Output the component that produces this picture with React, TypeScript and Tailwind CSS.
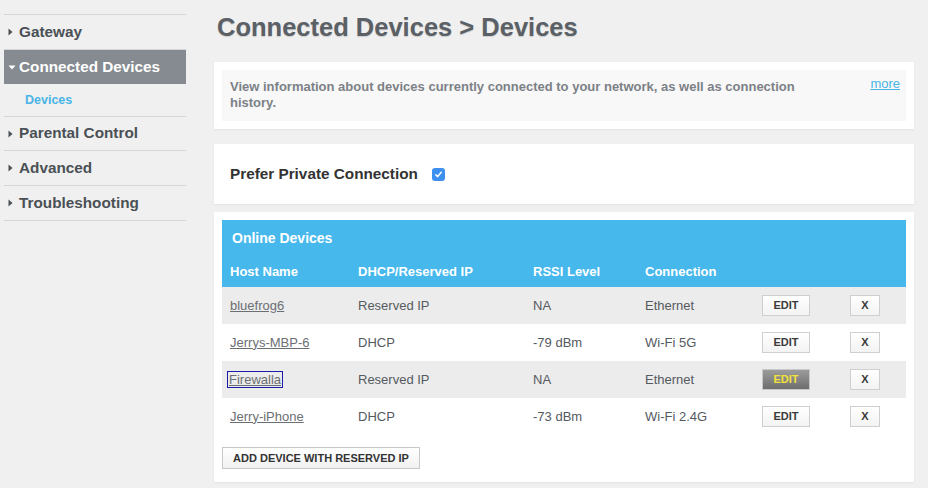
import React from "react";

const font = { fontFamily: '"Liberation Sans", Arial, Helvetica, sans-serif' };

function Tri({ down, color }: { down?: boolean; color: string }) {
  return down ? (
    <svg width="8" height="5" viewBox="0 0 8 5" className="shrink-0">
      <path d="M0.5 0.5 L7.5 0.5 L4 4.5 Z" fill={color} />
    </svg>
  ) : (
    <svg width="5" height="8" viewBox="0 0 5 8" className="shrink-0">
      <path d="M0.5 0.5 L4.5 4 L0.5 7.5 Z" fill={color} />
    </svg>
  );
}

function NavItem({ label, h }: { label: string; h: string }) {
  return (
    <div className={`${h} flex items-center border-b border-[#d6d6d6] pl-[4px] gap-[6px] text-[15.3px] font-bold text-[#4a5055]`}>
      <Tri color="#4a5055" />
      <span>{label}</span>
    </div>
  );
}

const rows = [
  { host: "bluefrog6", ip: "Reserved IP", rssi: "NA", conn: "Ethernet" },
  { host: "Jerrys-MBP-6", ip: "DHCP", rssi: "-79 dBm", conn: "Wi-Fi 5G" },
  { host: "Firewalla", ip: "Reserved IP", rssi: "NA", conn: "Ethernet", focus: true },
  { host: "Jerry-iPhone", ip: "DHCP", rssi: "-73 dBm", conn: "Wi-Fi 2.4G" },
];

const cols = "grid grid-cols-[128px_175px_112px_117px_88px_1fr] items-center pl-[8px]";

export default function App() {
  return (
    <div style={font} className="w-[928px] h-[488px] bg-[#f0f0f0] flex overflow-hidden">
      <div className="w-[186px] pl-[4px] pt-[14px] shrink-0">
        <div className="border-t border-[#d6d6d6]">
          <NavItem label="Gateway" h="h-[35px]" />
          <div className="h-[34px] flex items-center bg-[#858b90] pl-[4px] gap-[3px] text-[15.3px] font-bold text-white">
            <Tri down color="#ffffff" />
            <span>Connected Devices</span>
          </div>
          <div className="h-[33px] flex items-center border-b border-[#d6d6d6] pl-[21px] text-[12.5px] font-bold text-[#4ab4e6]">
            Devices
          </div>
          <NavItem label="Parental Control" h="h-[34px]" />
          <NavItem label="Advanced" h="h-[35px]" />
          <NavItem label="Troubleshooting" h="h-[35px]" />
        </div>
      </div>
      <div className="ml-[28px] w-[700px] pt-[14px]">
        <h1 className="h-[28px] flex items-center pl-[3px] text-[25.5px] font-bold text-[#5a6065] leading-none [text-shadow:0_1px_1px_rgba(0,0,0,0.15)]">
          Connected Devices &gt; Devices
        </h1>
        <div className="mt-[20px] bg-white p-[8px] shadow-[0_1px_2px_rgba(0,0,0,0.06)]">
          <div className="bg-[#f8f8f8] h-[51px] flex justify-between pl-[8px] pr-[6px] pt-[9px]">
            <p className="w-[575px] text-[13px] leading-[16px] font-bold text-[#7c8187]">
              View information about devices currently connected to your network, as well as connection history.
            </p>
            <a className="text-[13px] leading-[16px] text-[#4ab4e6] underline -mt-[3px]">more</a>
          </div>
        </div>
        <div className="mt-[15px] bg-white h-[60px] flex items-center pl-[16px] shadow-[0_1px_2px_rgba(0,0,0,0.06)]">
          <span className="text-[15.3px] font-bold text-[#333333]">Prefer Private Connection</span>
          <span className="ml-[14px] w-[13px] h-[13px] rounded-[3px] bg-[#3d8ff0] flex items-center justify-center">
            <svg width="9" height="9" viewBox="0 0 9 9">
              <path d="M1.8 4.8 L3.7 6.6 L7.2 2.2" stroke="white" strokeWidth="1.5" fill="none" strokeLinecap="round" strokeLinejoin="round" />
            </svg>
          </span>
        </div>
        <div className="mt-[8px] bg-white px-[8px] pt-[8px] pb-[13px] shadow-[0_1px_2px_rgba(0,0,0,0.06)]">
          <div className="bg-[#46b8ec] text-white font-bold">
            <div className="h-[36px] flex items-center pl-[10px] text-[14px]">Online Devices</div>
            <div className={`${cols} h-[31px] text-[13px]`}>
              <span>Host Name</span>
              <span>DHCP/Reserved IP</span>
              <span>RSSI Level</span>
              <span>Connection</span>
              <span></span>
              <span></span>
            </div>
          </div>
          {rows.map((r, i) => (
            <div key={r.host} className={`${cols} h-[37px] text-[13px] text-[#555a5f] ${i % 2 === 0 ? "bg-[#ececec]" : "bg-white"}`}>
              <span>
                <a className={`text-[#6b6f73] underline ${r.focus ? "outline outline-1 outline-[#1c1ca8] -ml-[2px] px-[1px]" : ""}`}>
                  {r.host}
                </a>
              </span>
              <span>{r.ip}</span>
              <span>{r.rssi}</span>
              <span>{r.conn}</span>
              <span>
                {r.focus ? (
                  <button className="w-[48px] h-[21px] border border-[#c8c8c8] bg-gradient-to-b from-[#9c9c9c] to-[#6e6e6e] text-[11px] font-bold text-[#f2e23c] flex items-center justify-center">
                    EDIT
                  </button>
                ) : (
                  <button className="w-[48px] h-[21px] border border-[#cfcfcf] bg-gradient-to-b from-white to-[#f3f3f3] text-[11px] font-bold text-[#3a3a3a] flex items-center justify-center">
                    EDIT
                  </button>
                )}
              </span>
              <span>
                <button className="w-[30px] h-[21px] border border-[#cfcfcf] bg-gradient-to-b from-white to-[#f3f3f3] text-[11px] font-bold text-[#3a3a3a] flex items-center justify-center">
                  X
                </button>
              </span>
            </div>
          ))}
          <button className="mt-[12px] w-[198px] h-[22px] border border-[#c8c8c8] bg-gradient-to-b from-white to-[#f1f1f1] text-[11px] font-bold text-[#333333] flex items-center justify-center">
            ADD DEVICE WITH RESERVED IP
          </button>
        </div>
      </div>
    </div>
  );
}
